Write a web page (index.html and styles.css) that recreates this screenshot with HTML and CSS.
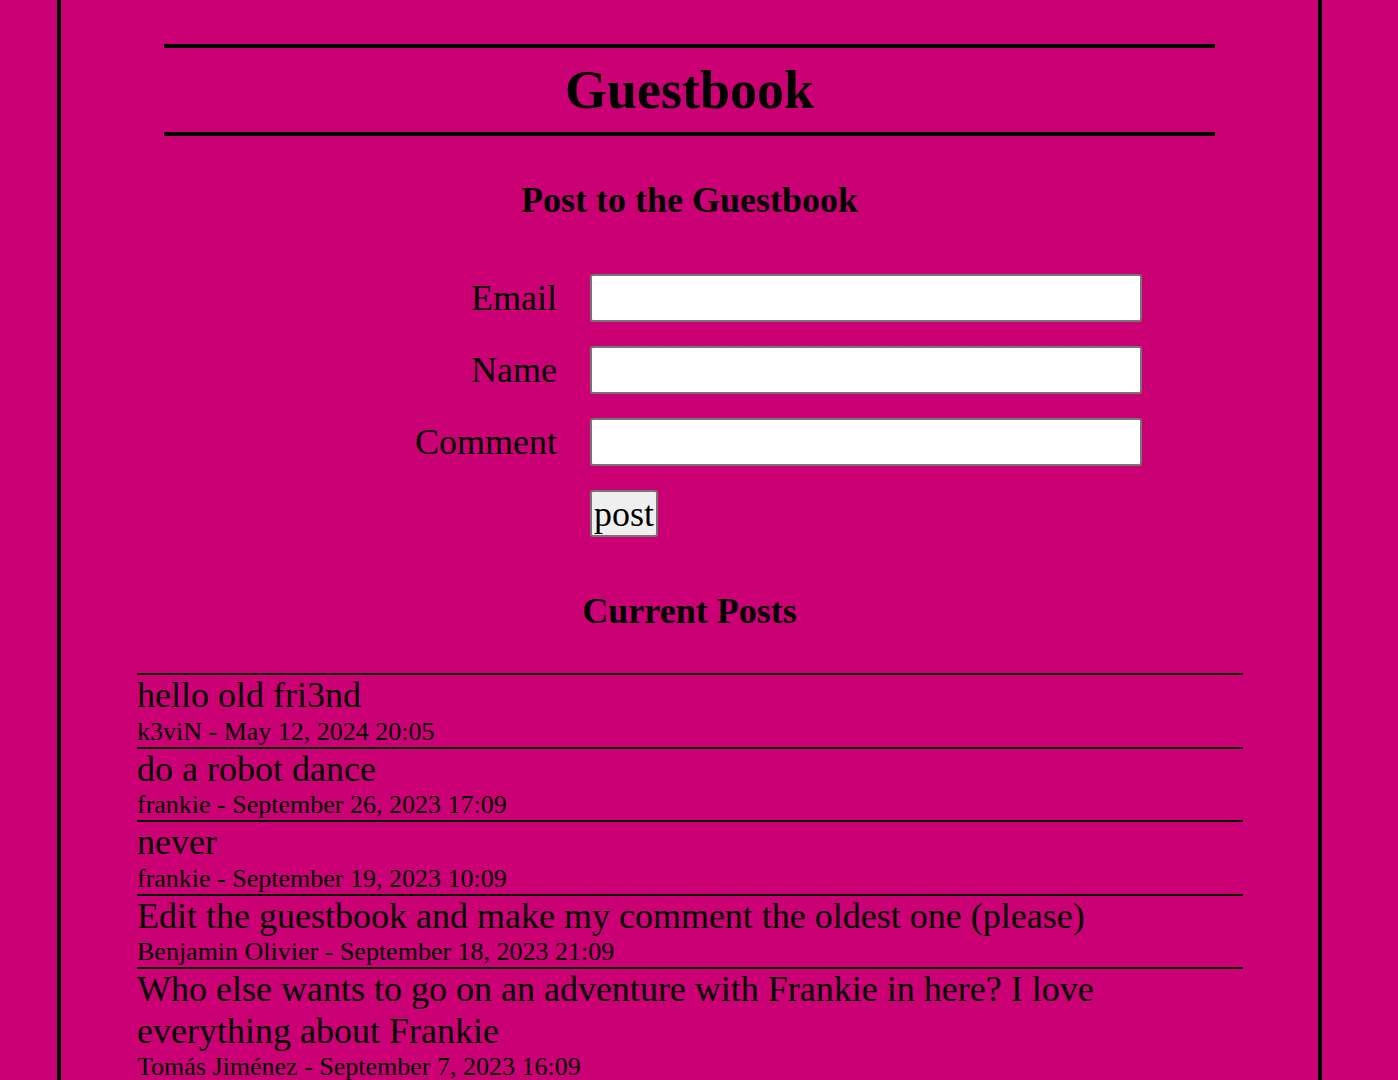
FILE: index.html
```html
<!DOCTYPE html>
<html lang="en">
<head>
<meta charset="utf-8">
<title>Guestbook</title>
<link rel="stylesheet" href="styles.css">
</head>
<body>
<div class="page">
  <h1 class="title">Guestbook</h1>

  <h2 class="section-title form-title">Post to the Guestbook</h2>
  <form class="post-form">
    <label class="field-label" for="email">Email</label>
    <input class="field-input" type="text" id="email" name="email">
    <label class="field-label" for="name">Name</label>
    <input class="field-input" type="text" id="name" name="name">
    <label class="field-label" for="comment">Comment</label>
    <input class="field-input" type="text" id="comment" name="comment">
    <span class="spacer"></span>
    <button class="post-button" type="button">post</button>
  </form>

  <h2 class="section-title posts-title">Current Posts</h2>
  <div class="posts">
    <div class="post">
      <p class="post-text">hello old fri3nd</p>
      <p class="post-meta">k3viN - May 12, 2024 20:05</p>
    </div>
    <div class="post">
      <p class="post-text">do a robot dance</p>
      <p class="post-meta">frankie - September 26, 2023 17:09</p>
    </div>
    <div class="post">
      <p class="post-text">never</p>
      <p class="post-meta">frankie - September 19, 2023 10:09</p>
    </div>
    <div class="post">
      <p class="post-text">Edit the guestbook and make my comment the oldest one (please)</p>
      <p class="post-meta">Benjamin Olivier - September 18, 2023 21:09</p>
    </div>
    <div class="post">
      <p class="post-text">Who else wants to go on an adventure with Frankie in here? I love everything about Frankie</p>
      <p class="post-meta">Tomás Jiménez - September 7, 2023 16:09</p>
    </div>
  </div>
</div>
</body>
</html>
```

FILE: styles.css
```css
html {
  scrollbar-width: none;
}

body {
  margin: 0;
  background: #cb0074;
  color: #000;
  font-family: "Liberation Serif", "Times New Roman", serif;
}

.page {
  box-sizing: border-box;
  width: 1265px;
  min-height: 100vh;
  margin-left: 57px;
  padding: 44px 0 40px;
  border-left: 4px solid #000;
  border-right: 4px solid #000;
}

.title {
  margin: 0 103px;
  padding: 11px 0 11px;
  border-top: 4px solid #000;
  border-bottom: 4px solid #000;
  font-size: 54px;
  font-weight: bold;
  line-height: normal;
  text-align: center;
}

.section-title {
  margin: 0;
  font-size: 36px;
  font-weight: bold;
  line-height: normal;
  text-align: center;
}

.form-title {
  margin-top: 43px;
}

.post-form {
  display: grid;
  grid-template-columns: 200px 552px;
  grid-auto-rows: 48px;
  column-gap: 34px;
  row-gap: 24px;
  align-items: center;
  margin: 53px 0 0 295px;
}

.field-label {
  font-size: 36px;
  text-align: right;
  margin-right: -1px;
}

.field-input {
  box-sizing: border-box;
  width: 552px;
  height: 48px;
  padding: 1px 4px;
  border: 2px solid #767676;
  border-radius: 3px;
  background: #fff;
  font-family: inherit;
  font-size: 36px;
}

.post-button {
  box-sizing: border-box;
  justify-self: start;
  align-self: start;
  height: 47px;
  padding: 0 2px;
  border: 2px solid #767676;
  border-radius: 3px;
  background: #efefef;
  color: #000;
  font-family: inherit;
  font-size: 36px;
  line-height: normal;
}

.posts-title {
  margin-top: 52px;
}

.posts {
  margin: 41px 75px 0 76px;
}

.post {
  border-top: 2px solid #000;
}

.post-text {
  margin: 0;
  font-size: 36px;
  line-height: 41.5px;
}

.post-meta {
  margin: 0;
  font-size: 26px;
  line-height: 30px;
}
```
